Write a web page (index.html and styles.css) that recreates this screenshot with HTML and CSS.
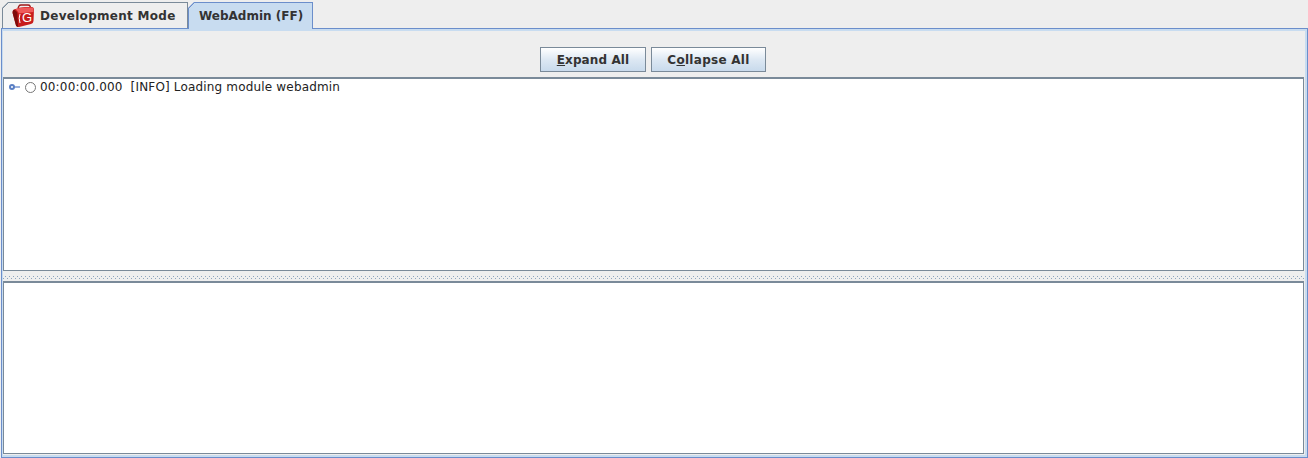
FILE: index.html
```html
<!DOCTYPE html>
<html lang="en">
<head>
<meta charset="utf-8">
<title>Development Mode</title>
<link rel="stylesheet" href="styles.css">
</head>
<body>
<div class="app">
  <div class="tabbar">
    <div class="tab tab-inactive">
      <svg class="logo" width="24" height="24" viewBox="0 0 24 24" aria-hidden="true">
        <path d="M7 4 L8 2 Q8.5 1 10 1 L17 1 Q18.5 1 19 2 L19.5 4" fill="none" stroke="#a01818" stroke-width="1.4"/>
        <path d="M3 5.5 Q8 3 14 3 L21 3 Q23 3.2 23 5.5 L22.5 17 Q22.4 19.5 20 20 L8 23 Q6 23.4 5 21.5 L1.6 9 Q1.2 6.6 3 5.5 Z" fill="#c81c1c"/>
        <path d="M3 5.5 Q1.2 6.6 1.6 9 L5 21.5 Q5.6 22.8 7 23 L6.5 10 Q6.4 7.5 3 5.5 Z" fill="#7e0c0c"/>
        <path d="M4.5 5.2 Q9 3.4 14 3.4 L21 3.4 Q22.6 3.6 22.6 5.5 L22.5 8 L8 9.5 Q6.8 7 4.5 5.2 Z" fill="#ef5a5a"/>
        <path d="M9 10 Q7.4 14 9 19" fill="none" stroke="#fff" stroke-width="1"/>
        <text x="11" y="18" class="logo-g">G</text>
      </svg>
      <span>Development Mode</span>
    </div>
    <div class="tab tab-active"><span>WebAdmin (FF)</span></div>
  </div>
  <main class="content">
    <div class="toolbar">
      <button class="btn btn-expand"><u>E</u>xpand All</button>
      <button class="btn btn-collapse">C<u>o</u>llapse All</button>
    </div>
    <section class="pane pane-top">
      <div class="row">
        <svg class="handle" width="12" height="8" viewBox="0 0 12 8" aria-hidden="true">
          <circle cx="3" cy="4" r="2" fill="#fff" stroke="#5a7fc4" stroke-width="2"/>
          <path d="M5 4 H11" stroke="#5a7fc4" stroke-width="1.2"/>
        </svg>
        <span class="radio"></span>
        <span class="msg">00:00:00.000&nbsp; [INFO] Loading module webadmin</span>
      </div>
    </section>
    <div class="divider"></div>
    <section class="pane pane-bottom"></section>
  </main>
</div>
</body>
</html>
```
FILE: styles.css
```css
html, body { margin: 0; height: 100%; }
body { background: #eeeeee; overflow: hidden; font-family: "DejaVu Sans", sans-serif; color: #333; }
.app { width: 1308px; height: 458px; display: flex; flex-direction: column; }
.tabbar { height: 28px; flex: none; display: flex; padding-left: 2px; align-items: flex-end; box-sizing: border-box; position: relative; z-index: 1; }
.tab { box-sizing: border-box; height: 26px; display: flex; align-items: center; font-size: 12px; font-weight: bold; color: #333; clip-path: polygon(6px 0, 100% 0, 100% 100%, 0 100%, 0 6px); background-origin: border-box; background-clip: border-box; }
.tab-inactive { width: 186px; padding-left: 8px; gap: 5px; letter-spacing: .29px; border: 1px solid #7a8a99; border-bottom: 0; background-image: linear-gradient(135deg, #7a8a99 5.2px, #eeeeee 5.2px); }
.tab-active { width: 125px; padding-left: 10px; height: 27px; margin-bottom: -1px; border: 1px solid #6b8ecb; border-bottom: 0; background-image: linear-gradient(135deg, #6b8ecb 5.2px, #c8dcf0 5.2px); }
.logo { flex: none; }
.logo-g { font-family: "Liberation Sans", sans-serif; font-size: 13px; fill: #fff; font-weight: normal; letter-spacing: 0; }
.content { flex: 1; min-height: 0; display: flex; flex-direction: column; box-sizing: border-box; margin-left: 1px; padding: 0 3px 3px 1px; border: 1px solid #6b8ecb; box-shadow: inset 1px 0 #c8dcf0, inset -2px 0 #c8dcf0, inset 0 -2px #c8dcf0, inset 0 2px #c8dcf0; }
.toolbar { height: 48px; flex: none; padding: 18px 1px 0 0; box-sizing: border-box; display: flex; justify-content: center; gap: 5px; }
.btn { box-sizing: border-box; height: 25px; padding: 0; font: bold 12px "DejaVu Sans", sans-serif; color: #333; border: 1px solid #7a8a99; background: linear-gradient(#ffffff, #dde8f3 50%, #c8daec); }
.btn-expand { width: 106px; letter-spacing: .1px; }
.btn-collapse { width: 115px; letter-spacing: .28px; }
.pane { background: #fff; border: 1px solid #7a8a99; border-top-width: 2px; box-sizing: border-box; }
.pane-top { height: 194px; flex: none; }
.pane-bottom { flex: 1; min-height: 0; }
.divider { height: 10px; flex: none; background-color: #eeeeee; background-image: repeating-linear-gradient(90deg, #8da4bd 0 1px, transparent 1px 4px), repeating-linear-gradient(90deg, #8da4bd 0 1px, transparent 1px 4px); background-size: 100% 1px; background-position: 2px 5px, 0 7px; background-repeat: no-repeat; }
.row { display: flex; align-items: center; height: 16px; padding-left: 5px; font-size: 12px; letter-spacing: .17px; color: #222; }
.handle { flex: none; margin-right: 4px; }
.radio { flex: none; box-sizing: border-box; width: 11px; height: 11px; border: 1px solid #777; border-radius: 50%; background: #fff; margin-right: 4px; }
```
